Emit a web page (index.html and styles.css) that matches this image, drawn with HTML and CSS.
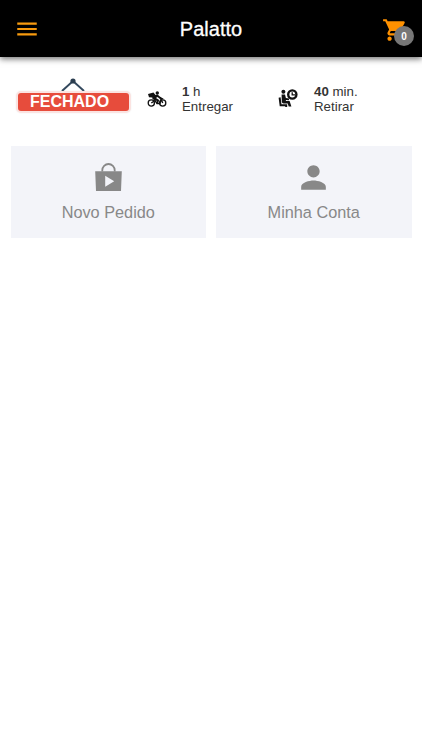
FILE: index.html
```html
<!DOCTYPE html>
<html lang="pt-BR">
<head>
    <meta charset="UTF-8">
    <meta name="viewport" content="width=device-width, initial-scale=1.0">
    <title>Palatto</title>
    <link rel="stylesheet" href="styles.css">
</head>
<body>
    <header class="topbar">
        <button class="icon-btn" aria-label="Menu">
            <svg viewBox="0 0 24 24"><path d="M3 18h18v-2H3v2zm0-5h18v-2H3v2zm0-7v2h18V6H3z"/></svg>
        </button>
        <h1 class="title">Palatto</h1>
        <button class="icon-btn cart" aria-label="Carrinho">
            <svg viewBox="0 0 24 24"><path d="M7 18c-1.1 0-1.99.9-1.99 2S5.9 22 7 22s2-.9 2-2-.9-2-2-2zM1 2v2h2l3.6 7.59-1.35 2.45c-.16.28-.25.61-.25.96 0 1.1.9 2 2 2h12v-2H7.42c-.14 0-.25-.11-.25-.25l.03-.12.9-1.63h7.45c.75 0 1.41-.41 1.75-1.03l3.58-6.49A1 1 0 0 0 20 4H5.21l-.94-2H1zm16 16c-1.1 0-1.99.9-1.99 2s.89 2 1.99 2 2-.9 2-2-.9-2-2-2z"/></svg>
            <span class="badge">0</span>
        </button>
    </header>

    <!-- Store status -->
    <section class="status">
        <div class="sign">
            <svg class="sign-hook" viewBox="0 0 26 13"><path d="M2 13L13 3L24 13" fill="none" stroke="#34495e" stroke-width="2"/><circle cx="13" cy="3" r="2.6" fill="#2c3e50"/></svg>
            <div class="sign-plate">FECHADO</div>
        </div>
        <div class="info delivery">
            <svg class="moto" viewBox="0 0 20 18">
                <g fill="none" stroke="#111">
                    <circle cx="4.3" cy="13" r="3.1" stroke-width="1.3"/>
                    <circle cx="15.7" cy="13" r="3.1" stroke-width="1.3"/>
                    <path d="M4.3 13L8 10.5L10 13.5H13L14 9L15.7 13M12.5 7.5L14.5 8.5" stroke-width="1.4"/>
                </g>
                <circle cx="10.3" cy="3" r="1.7"/>
                <path d="M1 4L6.5 2.6L8.5 5L10.5 4.5L14 7.4L16.5 8.5L16 9.6L12.5 8.6L10.4 7L9 8L12.2 10L11 13.5L9.5 13L10 11L5.5 9.3L5.3 7.4L2 7.2Z"/>
            </svg>
            <div class="info-text"><b>1</b> h<br>Entregar</div>
        </div>
        <div class="info pickup">
            <svg class="wait" viewBox="0 0 20 20">
                <circle cx="5.4" cy="3.8" r="2"/>
                <path d="M3.6 6.6H7L7.9 10L11 10.4V12.2L7.8 12L8 13H11.6L13.4 18.4H10.7L9.7 15.6H5.6Q4 15.6 3.8 13.8Z"/>
                <path d="M1.6 9.5L2.6 17.3H8.2V19" fill="none" stroke="#111" stroke-width="2"/>
                <circle cx="14.3" cy="6.5" r="4.1" fill="none" stroke="#111" stroke-width="2.4"/>
                <path d="M14.2 4.2V6.8H17" fill="none" stroke="#111" stroke-width="1.3"/>
            </svg>
            <div class="info-text"><b>40</b> min.<br>Retirar</div>
        </div>
    </section>

    <!-- Main actions -->
    <nav class="actions">
        <a class="card">
            <svg viewBox="0 0 37 37"><path d="M12.3 12.5V11.2a6.2 6.2 0 0 1 12.4 0V12.5" fill="none" stroke="#888" stroke-width="1.8"/><path fill-rule="evenodd" d="M5.2 12.2H31.8L31 32H6ZM15.2 16.7V27.7L24.2 22.2Z"/></svg>
            <span>Novo Pedido</span>
        </a>
        <a class="card">
            <svg viewBox="0 0 24 24"><path d="M12 12c2.21 0 4-1.79 4-4s-1.79-4-4-4-4 1.79-4 4 1.79 4 4 4zm0 2c-2.67 0-8 1.34-8 4v2h16v-2c0-2.66-5.33-4-8-4z"/></svg>
            <span>Minha Conta</span>
        </a>
    </nav>
</body>
</html>
```
FILE: styles.css
```css
* {
    box-sizing: border-box;
}
body {
    margin: 0;
    font-family: "Liberation Sans", Arial, sans-serif;
    background-color: #fff;
    color: #333;
}
svg {
    display: block;
}
.topbar {
    display: grid;
    grid-template-columns: 32px 1fr 32px;
    align-items: center;
    height: 57px;
    padding: 0 8px 0 14px;
    background-color: #000;
    box-shadow: 0 2px 6px rgba(0, 0, 0, 0.55);
}
.title {
    margin: 0;
    padding: 2px 6px 0 0;
    font-size: 20px;
    font-weight: normal;
    text-align: center;
    color: #fff;
    -webkit-text-stroke: 0.3px #fff;
}
.icon-btn {
    position: relative;
    padding: 0;
    border: none;
    background: none;
    cursor: pointer;
}
.icon-btn svg {
    width: 26px;
    height: 26px;
    fill: #f79a0e;
}
.cart {
    margin-top: 2px;
}
.cart svg {
    fill: #ff9100;
}
.badge {
    position: absolute;
    top: 9px;
    right: 0;
    width: 20px;
    height: 20px;
    border-radius: 50%;
    background-color: #777;
    color: #fff;
    font-size: 10px;
    font-weight: bold;
    line-height: 21px;
    text-align: center;
}
.status {
    display: grid;
    grid-template-columns: 131px 132px 1fr;
    height: 89px;
    padding: 21px 0 0 16px;
}
.sign {
    width: 115px;
}
.sign-hook {
    width: 26px;
    height: 13px;
    margin: 0 auto;
    transform: translateX(-1px);
}
.sign-plate {
    height: 22px;
    padding-left: 12px;
    border: 2px solid #fbe3e1;
    border-radius: 5px;
    background-color: #e74c3c;
    box-shadow: 0 0 2px #eee;
    color: #fff;
    font-size: 16px;
    font-weight: bold;
    line-height: 18px;
}
.info {
    display: flex;
    align-items: flex-start;
    padding-top: 6px;
}
.info svg {
    flex: none;
    fill: #111;
}
.moto {
    width: 20px;
    height: 18px;
    margin: 6px 15px 0 0;
}
.wait {
    width: 20px;
    height: 20px;
    margin: 4px 16px 0 -1px;
}
.info-text {
    font-size: 13.3px;
    line-height: 15px;
}
.actions {
    display: grid;
    grid-template-columns: 1fr 1fr;
    gap: 10px;
    padding: 0 10.5px;
}
.card {
    display: flex;
    flex-direction: column;
    align-items: center;
    height: 91.5px;
    padding-top: 13px;
    background-color: #f3f4f9;
    color: #888;
    font-size: 16.3px;
    cursor: pointer;
}
.card svg {
    width: 37px;
    height: 37px;
    fill: #888;
}
.card span {
    margin-top: 7px;
    line-height: 19px;
}
```
